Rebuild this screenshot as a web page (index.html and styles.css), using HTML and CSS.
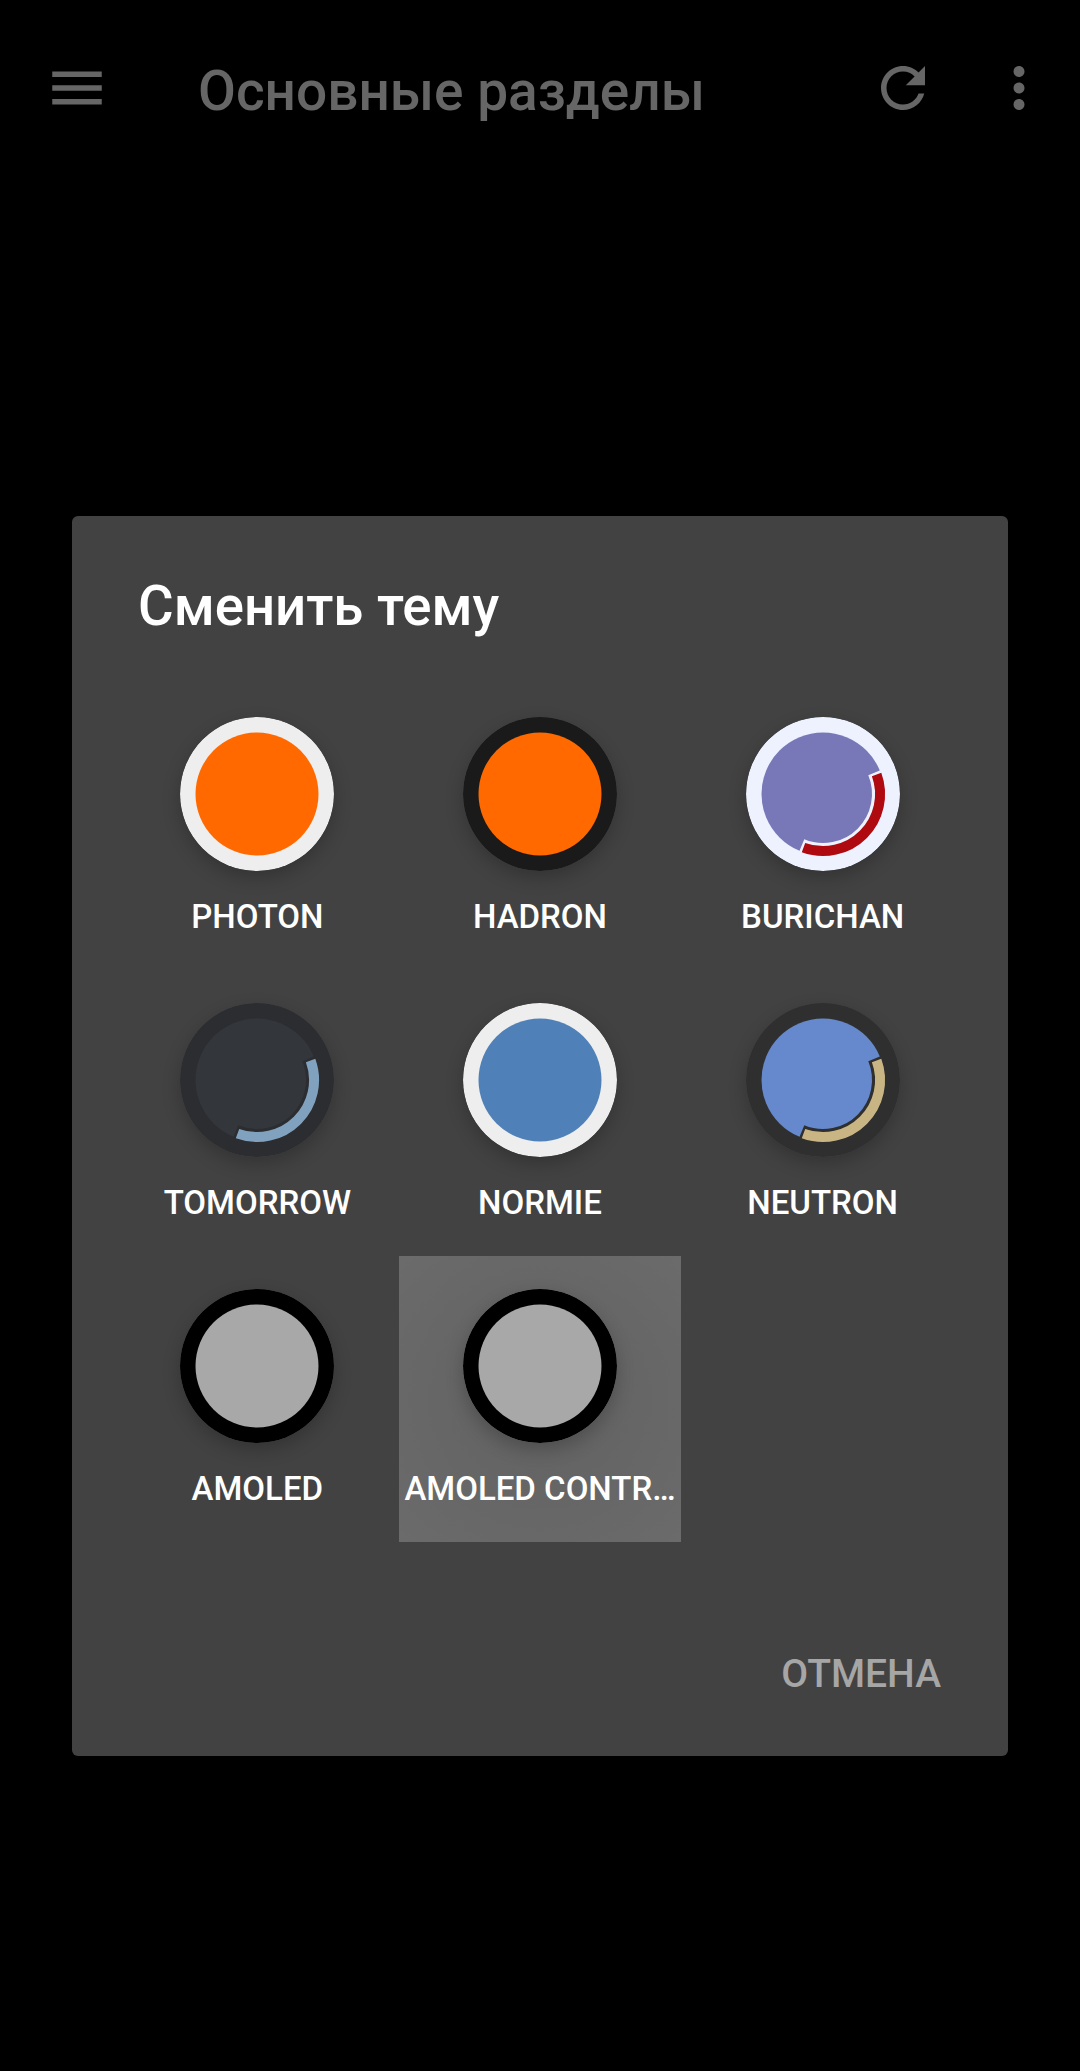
FILE: index.html
```html
<!DOCTYPE html>
<html lang="en">
<head>
<meta charset="UTF-8" />
<title>Сменить тему</title>
<link rel="stylesheet" href="styles.css">
</head>
<body>
<div class="toolbar">
  <svg class="tb-icon menu-icon" viewBox="0 0 24 24"><path d="M3 18h18v-2H3v2zm0-5h18v-2H3v2zm0-7v2h18V6H3z"/></svg>
  <div class="tb-title">Основные разделы</div>
  <svg class="tb-icon refresh-icon" viewBox="0 0 24 24"><path d="M17.65 6.35C16.2 4.9 14.21 4 12 4c-4.42 0-7.99 3.58-7.99 8s3.57 8 7.99 8c3.73 0 6.84-2.55 7.73-6h-2.08c-.82 2.33-3.04 4-5.65 4-3.31 0-6-2.69-6-6s2.69-6 6-6c1.66 0 3.14.69 4.22 1.78L13 11h7V4l-2.35 2.35z"/></svg>
  <svg class="tb-icon more-icon" viewBox="0 0 24 24"><path d="M12 8c1.1 0 2-.9 2-2s-.9-2-2-2-2 .9-2 2 .9 2 2 2zm0 2c-1.1 0-2 .9-2 2s.9 2 2 2 2-.9 2-2-.9-2-2-2zm0 6c-1.1 0-2 .9-2 2s.9 2 2 2 2-.9 2-2-.9-2-2-2z"/></svg>
</div>

<div class="dialog">
  <h2 class="dialog-title">Сменить тему</h2>
  <div class="theme-grid">
    <div class="theme-tile photon">
      <svg class="swatch" viewBox="0 0 154 154"><circle class="ring" cx="77" cy="77" r="77"/><circle class="disc" cx="77" cy="77" r="61.5"/></svg>
      <div class="theme-label">PHOTON</div>
    </div>
    <div class="theme-tile hadron">
      <svg class="swatch" viewBox="0 0 154 154"><circle class="ring" cx="77" cy="77" r="77"/><circle class="disc" cx="77" cy="77" r="61.5"/></svg>
      <div class="theme-label">HADRON</div>
    </div>
    <div class="theme-tile burichan">
      <svg class="swatch" viewBox="0 0 154 154"><circle class="ring" cx="77" cy="77" r="77"/><circle class="disc" cx="77" cy="77" r="61.5"/><path class="gap" d="M128.3 55.8A55.5 55.5 0 0 1 55.8 128.3"/><path class="accent" d="M130.6 57.5A57 57 0 0 1 57.5 130.6"/></svg>
      <div class="theme-label">BURICHAN</div>
    </div>
    <div class="theme-tile tomorrow">
      <svg class="swatch" viewBox="0 0 154 154"><circle class="ring" cx="77" cy="77" r="77"/><circle class="disc" cx="77" cy="77" r="61.5"/><path class="gap" d="M128.3 55.8A55.5 55.5 0 0 1 55.8 128.3"/><path class="accent" d="M130.6 57.5A57 57 0 0 1 57.5 130.6"/></svg>
      <div class="theme-label">TOMORROW</div>
    </div>
    <div class="theme-tile normie">
      <svg class="swatch" viewBox="0 0 154 154"><circle class="ring" cx="77" cy="77" r="77"/><circle class="disc" cx="77" cy="77" r="61.5"/></svg>
      <div class="theme-label">NORMIE</div>
    </div>
    <div class="theme-tile neutron">
      <svg class="swatch" viewBox="0 0 154 154"><circle class="ring" cx="77" cy="77" r="77"/><circle class="disc" cx="77" cy="77" r="61.5"/><path class="gap" d="M128.3 55.8A55.5 55.5 0 0 1 55.8 128.3"/><path class="accent" d="M130.6 57.5A57 57 0 0 1 57.5 130.6"/></svg>
      <div class="theme-label">NEUTRON</div>
    </div>
    <div class="theme-tile amoled">
      <svg class="swatch" viewBox="0 0 154 154"><circle class="ring" cx="77" cy="77" r="77"/><circle class="disc" cx="77" cy="77" r="61.5"/></svg>
      <div class="theme-label">AMOLED</div>
    </div>
    <div class="theme-tile amoled selected">
      <svg class="swatch" viewBox="0 0 154 154"><circle class="ring" cx="77" cy="77" r="77"/><circle class="disc" cx="77" cy="77" r="61.5"/></svg>
      <div class="theme-label">AMOLED CONTR…</div>
    </div>
  </div>
  <div class="dialog-actions">
    <span class="cancel-btn">ОТМЕНА</span>
  </div>
</div>
</body>
</html>
```

FILE: styles.css
```css
body {
  margin: 0;
  width: 1080px;
  height: 2071px;
  overflow: hidden;
  background: #000;
  font-family: Roboto, sans-serif;
}
.toolbar {
  display: flex;
  align-items: center;
  height: 66px;
  padding: 55px 0;
}
.tb-icon {
  width: 66px;
  height: 66px;
  flex: none;
  fill: #666;
}
.menu-icon {
  margin-left: 44px;
}
.tb-title {
  margin: 6px 0 0 88px;
  width: 672px;
  color: #666;
  font-size: 55px;
  font-weight: 500;
  white-space: nowrap;
}
.more-icon {
  margin-left: 50px;
}
.dialog {
  margin: 340px 72px 0;
  height: 1240px;
  background: #424242;
  border-radius: 6px;
  box-sizing: border-box;
  padding-top: 55px;
}
.dialog-title {
  margin: 0 0 0 66px;
  height: 113px;
  line-height: 70px;
  color: #fff;
  font-size: 54.6px;
  font-weight: 500;
}
.theme-grid {
  display: grid;
  grid-template-columns: repeat(3, minmax(0, 1fr));
  grid-auto-rows: 286px;
  width: 848px;
  margin-left: 44px;
}
.theme-tile {
  display: flex;
  flex-direction: column;
  align-items: center;
  padding-top: 33px;
  box-sizing: border-box;
}
.theme-tile.selected {
  background: radial-gradient(circle at center, #646464 30%, #6b6b6b 100%);
}
.swatch {
  width: 154px;
  height: 154px;
  flex: none;
  border-radius: 50%;
  box-shadow: 0 7px 18px rgba(0, 0, 0, 0.22);
}
.theme-label {
  margin-top: 24px;
  line-height: 44px;
  color: #fff;
  font-size: 33px;
  font-weight: 500;
  white-space: nowrap;
}
.gap, .accent {
  fill: none;
}
.gap {
  stroke-width: 13;
}
.accent {
  stroke-width: 10;
}
.photon .ring { fill: #eee; }
.photon .disc { fill: #ff6900; }
.hadron .ring { fill: #1a1a1a; }
.hadron .disc { fill: #ff6900; }
.burichan .ring { fill: #eef2ff; }
.burichan .disc { fill: #7878b8; }
.burichan .gap { stroke: #eef2ff; }
.burichan .accent { stroke: #af0a0f; }
.tomorrow .ring { fill: #2b2d31; }
.tomorrow .disc { fill: #33363b; }
.tomorrow .gap { stroke: #2b2d31; }
.tomorrow .accent { stroke: #81a2be; }
.normie .ring { fill: #eee; }
.normie .disc { fill: #5080b8; }
.neutron .ring { fill: #2f2f2f; }
.neutron .disc { fill: #6589cc; }
.neutron .gap { stroke: #2f2f2f; }
.neutron .accent { stroke: #c9b583; }
.amoled .ring { fill: #000; }
.amoled .disc { fill: #a8a8a8; }
.dialog-actions {
  display: flex;
  justify-content: flex-end;
  padding: 110px 67px 0 0;
}
.cancel-btn {
  color: #a6a6a6;
  font-size: 39px;
  font-weight: 500;
  line-height: 44px;
}
```
